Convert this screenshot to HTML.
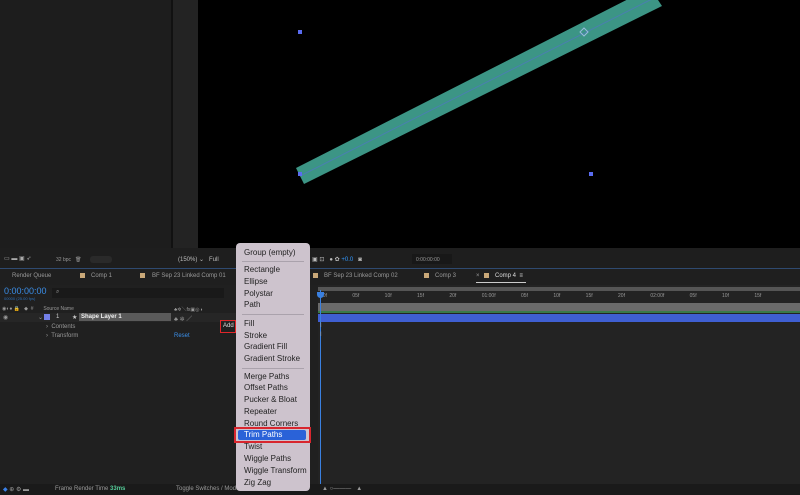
<html><head><style>
body{margin:0;width:800px;height:495px;overflow:hidden;background:#1f1f1f;font-family:"Liberation Sans",sans-serif;position:relative}
div{position:absolute}
.t{font-size:6px;color:#999;white-space:nowrap}
.m{font-size:8px;color:#222;left:8px;white-space:nowrap}
.sep{left:6px;right:6px;height:1px;background:#aaa2ac}
</style></head><body>
<div style="left:0;top:0;width:171px;height:248px;background:#1d1d1d"></div>
<div style="left:171px;top:0;width:2px;height:248px;background:#111"></div>
<div style="left:173px;top:0;width:25px;height:248px;background:#232323"></div>
<div style="left:198px;top:0;width:602px;height:248px;background:#000"></div>
<svg style="position:absolute;left:0;top:0" width="800" height="248">
<polygon points="296,168 650,-12 662,6 304,184" fill="#3c9585"/>
<line x1="300" y1="176" x2="656" y2="-3" stroke="#4a7fb0" stroke-width="1"/>
<rect x="298" y="30" width="4" height="4" fill="#5a6cf0"/>
<rect x="589" y="172" width="4" height="4" fill="#5a6cf0"/>
<rect x="298" y="172" width="4" height="4" fill="#5a6cf0"/>
<polygon points="584,28 588,32 584,36 580,32" fill="none" stroke="#9bd" stroke-width="1"/>
</svg>
<div style="left:0;top:248px;width:800px;height:20px;background:#1e1e1e"></div>
<div class="t" style="left:4px;top:255px;color:#aaa">▭ ▬ ▣ ➶</div>
<div class="t" style="left:56px;top:257px;font-size:5px">32 bpc &nbsp; 🗑</div>
<div style="left:90px;top:256px;width:22px;height:7px;background:#2a2a2a;border-radius:3px"></div>
<div class="t" style="left:178px;top:256px;color:#bbb">(150%) ⌄ &nbsp; Full</div>
<div class="t" style="left:312px;top:256px;color:#bbb">▣ ⊡ &nbsp; ● ✿ <span style="color:#39f">+0.0</span> &nbsp; ◙</div>
<div style="left:412px;top:254px;width:40px;height:10px;background:#181818"></div>
<div class="t" style="left:416px;top:257px;font-size:5px">0:00:00:00</div>
<div style="left:0;top:268px;width:800px;height:1px;background:#2f4a70"></div>
<div style="left:0;top:269px;width:800px;height:16px;background:#1f1f1f"></div>
<div class="t" style="left:12px;top:273px">Render Queue</div>
<div style="left:80px;top:273px;width:5px;height:5px;background:#c9a878"></div><div class="t" style="left:91px;top:273px">Comp 1</div>
<div style="left:140px;top:273px;width:5px;height:5px;background:#c9a878"></div><div class="t" style="left:152px;top:273px">BF Sep 23 Linked Comp 01</div>
<div style="left:313px;top:273px;width:5px;height:5px;background:#c9a878"></div><div class="t" style="left:324px;top:273px">BF Sep 23 Linked Comp 02</div>
<div style="left:424px;top:273px;width:5px;height:5px;background:#c9a878"></div><div class="t" style="left:435px;top:273px">Comp 3</div>
<div class="t" style="left:476px;top:273px">×</div>
<div style="left:484px;top:273px;width:5px;height:5px;background:#c9a878"></div><div class="t" style="left:495px;top:273px;color:#ddd">Comp 4 &nbsp;≡</div>
<div style="left:476px;top:282px;width:50px;height:1px;background:#ccc"></div>
<div style="left:0;top:285px;width:800px;height:210px;background:#202020"></div>
<div style="left:4px;top:286px;font-size:9px;color:#3a8ee8">0:00:00:00</div>
<div style="left:4px;top:296px;font-size:4px;color:#2d6cb0">00000 (25.00 fps)</div>
<div style="left:52px;top:288px;width:172px;height:10px;background:#191919"></div>
<div class="t" style="left:56px;top:289px">⌕</div>
<div class="t" style="left:2px;top:306px;font-size:5px">◉◐● 🔒 &nbsp; ◆ &nbsp;# &nbsp; &nbsp; &nbsp; Source Name</div>
<div class="t" style="left:174px;top:306px;font-size:5px">♣✲＼fx▣◎◑</div>
<div style="left:0;top:313px;width:240px;height:9px;background:#262626"></div>
<div class="t" style="left:3px;top:314px">◉</div>
<div class="t" style="left:38px;top:314px">⌄</div>
<div style="left:44px;top:314px;width:6px;height:6px;background:#7480e8"></div>
<div class="t" style="left:56px;top:314px;color:#ccc">1</div>
<div class="t" style="left:72px;top:314px;color:#ccc">★</div>
<div style="left:79px;top:313px;width:92px;height:8px;background:#5a5a5a"></div>
<div class="t" style="left:81px;top:314px;color:#eee;font-weight:bold">Shape Layer 1</div>
<div class="t" style="left:174px;top:314px">♣ ✲ ／</div>
<div class="t" style="left:46px;top:324px">›&nbsp; Contents</div>
<div class="t" style="left:46px;top:333px">›&nbsp; Transform</div>
<div class="t" style="left:174px;top:333px;color:#3a8ee8">Reset</div>
<div style="left:220px;top:320px;width:16px;height:13px;border:1.5px solid #e0262a;box-sizing:border-box"></div>
<div class="t" style="left:223px;top:323px;color:#ddd">Add</div>
<div style="left:318px;top:285px;width:482px;height:210px;background:#232323"></div>
<div style="left:318px;top:287px;width:482px;height:4px;background:#555"></div>
<div class="t" style="left:320px;top:293px;font-size:5px;word-spacing:24px">00f 05f 10f 15f 20f 01:00f 05f 10f 15f 20f 02:00f 05f 10f 15f</div>
<div style="left:318px;top:303px;width:482px;height:8px;background:#6a6a6a"></div>
<div style="left:318px;top:311px;width:482px;height:2px;background:#3a7a4a"></div>
<div style="left:318px;top:314px;width:482px;height:8px;background:#3f5fd2"></div>
<div style="left:320px;top:290px;width:1px;height:205px;background:#3a80e0"></div>
<div style="left:317px;top:292px;width:7px;height:6px;background:#3a80e0;border-radius:0 0 4px 4px"></div>
<div class="t" style="left:320px;top:323px">I</div><div class="t" style="left:320px;top:332px">I</div>
<div style="left:0;top:484px;width:800px;height:11px;background:#1a1a1a"></div>
<div class="t" style="left:3px;top:486px;color:#3a80e8">◆<span style="color:#999"> ⊕ ⚙ ▬</span></div>
<div class="t" style="left:55px;top:486px">Frame Render Time <b style="color:#5c9">33ms</b></div>
<div class="t" style="left:176px;top:486px">Toggle Switches / Modes</div>
<div class="t" style="left:322px;top:486px">▲ ○——— &nbsp; ▲</div>
<div style="left:236px;top:243px;width:74px;height:248px;background:#cdc3cd;border-radius:4px">
<div class="m" style="top:5px">Group (empty)</div>
<div class="sep" style="top:18px"></div>
<div class="m" style="top:22px">Rectangle</div>
<div class="m" style="top:34px">Ellipse</div>
<div class="m" style="top:46px">Polystar</div>
<div class="m" style="top:57px">Path</div>
<div class="sep" style="top:71px"></div>
<div class="m" style="top:76px">Fill</div>
<div class="m" style="top:88px">Stroke</div>
<div class="m" style="top:99px">Gradient Fill</div>
<div class="m" style="top:111px">Gradient Stroke</div>
<div class="sep" style="top:125px"></div>
<div class="m" style="top:129px">Merge Paths</div>
<div class="m" style="top:140px">Offset Paths</div>
<div class="m" style="top:152px">Pucker &amp; Bloat</div>
<div class="m" style="top:164px">Repeater</div>
<div class="m" style="top:176px">Round Corners</div>
<div style="left:-2px;top:184px;width:77px;height:16px;border:2px solid #d8262e;box-sizing:border-box"></div>
<div style="left:2px;top:187px;width:68px;height:10px;background:#2a62d8;border-radius:2px"></div>
<div class="m" style="top:187px;color:#fff">Trim Paths</div>
<div class="m" style="top:199px">Twist</div>
<div class="m" style="top:211px">Wiggle Paths</div>
<div class="m" style="top:223px">Wiggle Transform</div>
<div class="m" style="top:235px">Zig Zag</div>
</div>
</body></html>
